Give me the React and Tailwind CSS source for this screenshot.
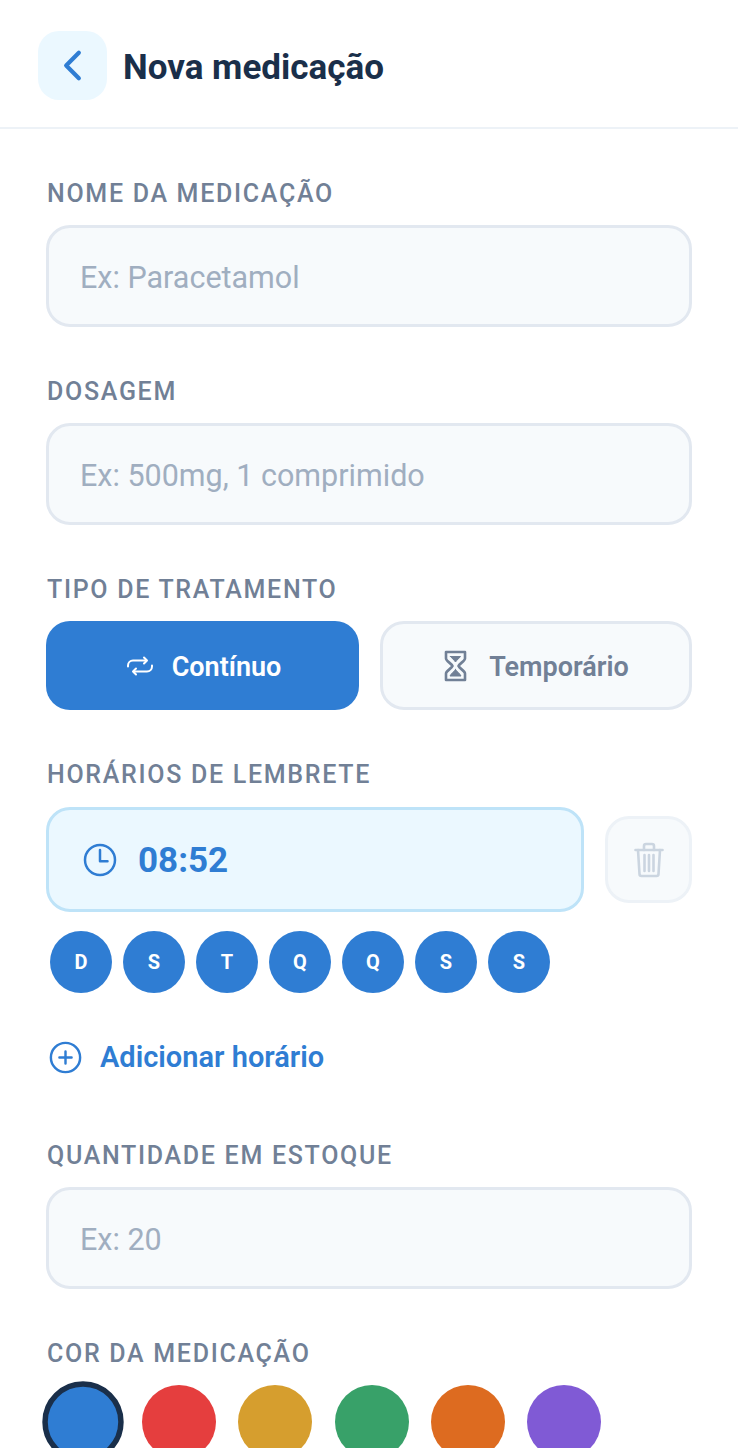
import React from 'react';
import {
  IoChevronBack,
  IoRepeatOutline,
  IoTimeOutline,
  IoAddCircleOutline,
} from 'react-icons/io5';

const days = ['D', 'S', 'T', 'Q', 'Q', 'S', 'S'];

function Label({ children, className = '' }) {
  return (
    <p className={`text-[25px] leading-[30px] pt-[2px] pl-[1px] font-medium tracking-[1.7px] text-[#718096] ${className}`}>
      {children}
    </p>
  );
}

function Field({ placeholder }) {
  return (
    <div className="mt-[16px] h-[102px] rounded-[24px] border-[3px] border-[#e2e8f0] bg-[#f7fafc] pl-[31px] pt-[3px] flex items-center text-[30.5px] text-[#a0aec0]">
      {placeholder}
    </div>
  );
}

function HourglassIcon() {
  return (
    <svg width="25" height="34" viewBox="0 0 25 34" fill="none" stroke="currentColor" strokeWidth="2.6" strokeLinecap="round" strokeLinejoin="round">
      <path d="M3 3h19v6.500c0 2.500-5.500 5-6.500 7.500 1 2.500 6.500 5 6.500 7.500V31H3v-6.500c0-2.500 5.500-5 6.500-7.500-1-2.500-6.500-5-6.500-7.500z" />
      <path d="M7.500 7.500h10c-.8 1.500-3.500 3-5 5.500-1.500-2.500-4.200-4-5-5.500z" fill="currentColor" strokeWidth="1" />
      <path d="M12.500 20.500c1 2 4.500 4 5.500 6.500H7c1-2.500 4.500-4.500 5.500-6.500z" fill="currentColor" strokeWidth="1" />
    </svg>
  );
}

function TrashIcon() {
  return (
    <svg width="30" height="36" viewBox="0 0 30 36" fill="none" stroke="currentColor" strokeWidth="2.6" strokeLinecap="round" strokeLinejoin="round">
      <path d="M1.500 8h27" />
      <path d="M10 8V4a2 2 0 0 1 2-2h6a2 2 0 0 1 2 2v4" />
      <path d="M4 8l1.500 24a2 2 0 0 0 2 2h15a2 2 0 0 0 2-2L26 8" />
      <path d="M10.500 13v16M15 13v16M19.500 13v16" />
    </svg>
  );
}

export default function App() {
  return (
    <div className="h-[1448px] w-[738px] overflow-hidden bg-white font-['Roboto',sans-serif]">
      {/* Header */}
      <header className="h-[129px] border-b-2 border-[#edf2f7] pl-[38px] pt-[4px] flex items-center gap-[16px]">
        <button className="w-[69px] h-[69px] rounded-[21px] bg-[#ebf8ff] flex items-center justify-center text-[#2f7dd3]">
          <IoChevronBack size={45} />
        </button>
        <h1 className="text-[35px] font-bold pt-[6px] text-[#1a2f4a]">Nova medicação</h1>
      </header>

      <main className="px-[46px] pt-[48px]">
        <Label>NOME DA MEDICAÇÃO</Label>
        <Field placeholder="Ex: Paracetamol" />

        <Label className="mt-[48px]">DOSAGEM</Label>
        <Field placeholder="Ex: 500mg, 1 comprimido" />

        <Label className="mt-[48px]">TIPO DE TRATAMENTO</Label>
        <div className="mt-[16px] flex gap-[21px]">
          <button className="w-[313px] h-[89px] rounded-[24px] bg-[#2f7dd3] text-white flex items-center justify-center gap-[16px] text-[27px] font-semibold">
            <IoRepeatOutline size={32} />
            <span className="pt-[4px]">Contínuo</span>
          </button>
          <button className="w-[312px] h-[89px] rounded-[24px] border-[3px] border-[#e2e8f0] bg-[#f7fafc] text-[#718096] flex items-center justify-center gap-[21px] text-[27px] font-semibold">
            <HourglassIcon />
            <span className="pt-[4px]">Temporário</span>
          </button>
        </div>

        <Label className="mt-[48px]">HORÁRIOS DE LEMBRETE</Label>
        <div className="mt-[17px] flex items-center gap-[21px]">
          <div className="w-[538px] h-[105px] rounded-[24px] border-[3px] border-[#bee3f8] bg-[#ebf8ff] pl-[31px] flex items-center gap-[18px] text-[#2f7dd3]">
            <IoTimeOutline size={40} />
            <span className="text-[35px] pt-[4px] font-bold">08:52</span>
          </div>
          <button className="w-[87px] h-[87px] rounded-[24px] border-[3px] border-[#edf2f7] bg-[#f7fafc] flex items-center justify-center text-[#cbd5e0]">
            <TrashIcon />
          </button>
        </div>

        <div className="mt-[19px] ml-[4px] flex gap-[11px]">
          {days.map((d, i) => (
            <div key={i} className="w-[62px] h-[62px] rounded-full bg-[#2f7dd3] text-white flex items-center justify-center text-[20px] font-bold">
              {d}
            </div>
          ))}
        </div>

        <button className="mt-[44px] flex items-center gap-[15px] text-[#2f7dd3] text-[29px] leading-[40px] font-semibold">
          <IoAddCircleOutline size={39} />
          Adicionar horário
        </button>

        <Label className="mt-[62px]">QUANTIDADE EM ESTOQUE</Label>
        <Field placeholder="Ex: 20" />

        <Label className="mt-[48px]">COR DA MEDICAÇÃO</Label>
        <div className="mt-[16px] flex gap-[22.2px]">
          <div className="w-[74px] h-[74px] shrink-0 rounded-full bg-[#2f7dd3] border-[5px] border-[#1a2f4a] scale-110" />
          <div className="w-[74px] h-[74px] shrink-0 rounded-full bg-[#e53e3e]" />
          <div className="w-[74px] h-[74px] shrink-0 rounded-full bg-[#d69e2e]" />
          <div className="w-[74px] h-[74px] shrink-0 rounded-full bg-[#38a169]" />
          <div className="w-[74px] h-[74px] shrink-0 rounded-full bg-[#dd6b20]" />
          <div className="w-[74px] h-[74px] shrink-0 rounded-full bg-[#805ad5]" />
        </div>
      </main>
    </div>
  );
}
